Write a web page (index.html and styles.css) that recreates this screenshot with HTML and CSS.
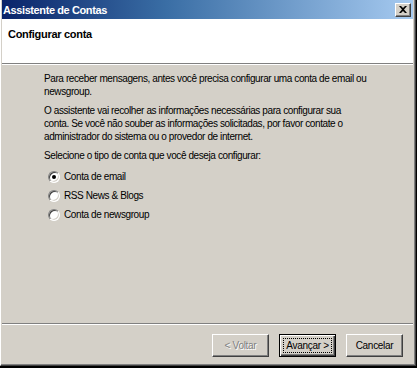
FILE: index.html
```html
<!DOCTYPE html>
<html lang="pt">
  <head>
    <meta charset="utf-8" />
    <title>Assistente de Contas</title>
    <link rel="stylesheet" href="styles.css">
  </head>
  <body>
    <div class="window">
      <div class="titlebar">
        <span class="title">Assistente de Contas</span>
        <div class="close-btn">
          <svg width="8" height="7" viewBox="0 0 8 7"><path d="M0 0h2l2 2 2-2h2L5 3.5 8 7H6L4 5 2 7H0l3-3.5z" fill="#000"/></svg>
        </div>
      </div>
      <div class="header">
        <h1 class="header-title">Configurar conta</h1>
      </div>
      <div class="content">
        <p>Para receber mensagens, antes você precisa configurar uma conta de email ou<br>newsgroup.</p>
        <p>O assistente vai recolher as informações necessárias para configurar sua<br>conta. Se você não souber as informações solicitadas, por favor contate o<br>administrador do sistema ou o provedor de internet.</p>
        <p>Selecione o tipo de conta que você deseja configurar:</p>
        <div class="options">
          <label class="option"><span class="radio checked"></span>Conta de email</label>
          <label class="option"><span class="radio"></span>RSS News &amp; Blogs</label>
          <label class="option"><span class="radio"></span>Conta de newsgroup</label>
        </div>
      </div>
      <div class="footer">
        <button class="btn disabled">&lt; Voltar</button>
        <button class="btn default"><span class="focus">Avançar &gt;</span></button>
        <button class="btn">Cancelar</button>
      </div>
    </div>
  </body>
</html>
```

FILE: styles.css
```css
* {
  box-sizing: border-box;
}

html, body {
  margin: 0;
  height: 100%;
  background: #000000;
}

body {
  font-family: "Liberation Sans", Arial, sans-serif;
  font-size: 10px;
  letter-spacing: -0.4px;
  color: #000000;
}

.window {
  width: 416px;
  height: 366px;
  display: flex;
  flex-direction: column;
  background: #D4D0C8;
  border-left: 1px solid #ffffff;
  border-right: 1px solid #404040;
  border-bottom: 1px solid #404040;
  padding: 0 2px 2px 1px;
  box-shadow: inset -1px -1px #808080;
}

.titlebar {
  height: 19px;
  flex: none;
  display: flex;
  align-items: center;
  justify-content: space-between;
  padding: 0 2px 0 1px;
  background: linear-gradient(90deg, #0A246A 0%, #3A6EA5 40%, #A6CAF0 100%);
}

.title {
  color: #ffffff;
  font-weight: bold;
  font-size: 11px;
  letter-spacing: -0.4px;
}

.close-btn {
  width: 16px;
  height: 14px;
  display: flex;
  align-items: center;
  justify-content: center;
  background: #D4D0C8;
  border-top: 1px solid #ffffff;
  border-left: 1px solid #ffffff;
  border-right: 1px solid #404040;
  border-bottom: 1px solid #404040;
  box-shadow: inset -1px -1px #808080;
}

.header {
  height: 45px;
  flex: none;
  background: #ffffff;
  border-bottom: 1px solid #808080;
  box-shadow: 0 1px #ffffff;
  padding: 9px 0 0 6px;
  margin-bottom: 1px;
}

.header-title {
  margin: 0;
  font-size: 11px;
  font-weight: bold;
  letter-spacing: -0.3px;
}

.content {
  flex: 1;
  padding: 7px 30px 0 42px;
  border-bottom: 1px solid #808080;
  box-shadow: 0 1px #ffffff;
}

.content p {
  margin: 0 0 6px 0;
  line-height: 13px;
}

.options {
  display: flex;
  flex-direction: column;
  gap: 6px;
  padding: 2px 0 0 4px;
}

.option {
  display: flex;
  align-items: center;
  gap: 4px;
  height: 13px;
}

.radio {
  position: relative;
  width: 12px;
  height: 12px;
  border-radius: 50%;
  background: #ffffff;
  border: 1px solid;
  border-color: #808080 #ffffff #ffffff #808080;
  box-shadow: inset 1px 1px #404040, inset -1px -1px #D4D0C8;
}

.radio.checked::after {
  content: "";
  position: absolute;
  left: 3px;
  top: 3px;
  width: 4px;
  height: 4px;
  border-radius: 50%;
  background: #000000;
}

.footer {
  height: 38px;
  flex: none;
  margin-top: 1px;
  display: flex;
  justify-content: flex-end;
  align-items: flex-start;
  gap: 10px;
  padding: 9px 10px 0 0;
}

.btn {
  width: 57px;
  height: 23px;
  padding: 0;
  font-family: inherit;
  font-size: 10px;
  letter-spacing: -0.3px;
  color: #000000;
  background: #D4D0C8;
  border-top: 1px solid #ffffff;
  border-left: 1px solid #ffffff;
  border-right: 1px solid #404040;
  border-bottom: 1px solid #404040;
  box-shadow: inset -1px -1px #808080;
}

.btn.disabled {
  color: #808080;
  text-shadow: 1px 1px #ffffff;
}

.btn.default {
  border: 1px solid #000000;
  box-shadow: inset 1px 1px #ffffff, inset -1px -1px #404040, inset -2px -2px #808080;
  padding: 3px;
}

.focus {
  display: block;
  height: 15px;
  line-height: 13px;
  border: 1px dotted #000000;
}
```
